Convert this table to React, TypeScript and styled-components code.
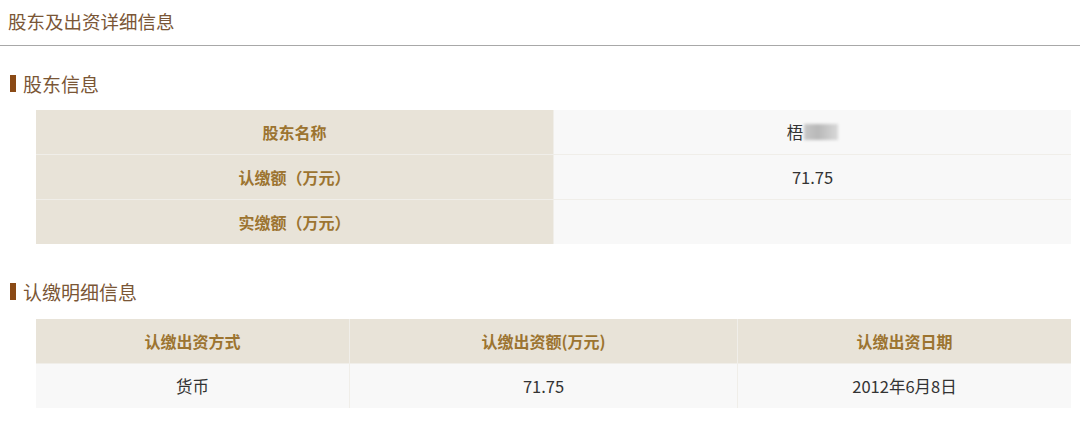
import React from 'react';
import styled, { createGlobalStyle } from 'styled-components';

const GlobalStyle = createGlobalStyle`
  html, body {
    margin: 0;
    padding: 0;
    background: #ffffff;
    font-family: "Noto Sans CJK SC", "Liberation Sans", sans-serif;
  }
`;

const holders = [
  { label: '股东名称', value: 'name' },
  { label: '认缴额（万元）', value: '71.75' },
  { label: '实缴额（万元）', value: '' },
];

const detailHead = ['认缴出资方式', '认缴出资额(万元)', '认缴出资日期'];
const detailRows = [['货币', '71.75', '2012年6月8日']];

function App() {
  return (
    <>
      <GlobalStyle />
      <Page>
        <PageTitle>股东及出资详细信息</PageTitle>
        <Section>
          <SectionTitle>股东信息</SectionTitle>
          <InfoTable>
            {holders.map((row) => (
              <InfoRow key={row.label}>
                <LabelCell>{row.label}</LabelCell>
                <ValueCell>
                  {row.value === 'name' ? (
                    <>
                      梧<Blur />
                    </>
                  ) : (
                    row.value
                  )}
                </ValueCell>
              </InfoRow>
            ))}
          </InfoTable>
        </Section>
        <Section>
          <SectionTitle>认缴明细信息</SectionTitle>
          <DetailTable>
            <DetailRow>
              {detailHead.map((h) => (
                <LabelCell key={h}>{h}</LabelCell>
              ))}
            </DetailRow>
            {detailRows.map((r, i) => (
              <DetailRow key={i}>
                {r.map((c, j) => (
                  <ValueCell key={j}>{c}</ValueCell>
                ))}
              </DetailRow>
            ))}
          </DetailTable>
        </Section>
      </Page>
    </>
  );
}

const Page = styled.div`
  width: 1080px;
  height: 440px;
  overflow: hidden;
`;

const PageTitle = styled.div`
  height: 45px;
  padding-left: 8px;
  line-height: 42px;
  font-size: 18.5px;
  color: #7a5636;
  border-bottom: 1.5px solid #a8a8a8;
`;

const Section = styled.section`
  padding: 25px 9px 0 36px;
  &:last-child {
    padding-top: 35px;
  }
`;

const SectionTitle = styled.div`
  display: flex;
  align-items: center;
  gap: 7px;
  margin-left: -26px;
  height: 24px;
  font-size: 19px;
  color: #7a5636;
  &::before {
    content: '';
    width: 6px;
    height: 17px;
    background: #8a4a16;
  }
`;

const InfoTable = styled.div`
  margin-top: 15px;
  display: grid;
  background: #f0eee9;
  gap: 1px;
`;

const InfoRow = styled.div`
  display: grid;
  grid-template-columns: 517px 1fr;
  gap: 1px;
  height: 44px;
`;

const DetailTable = styled.div`
  margin-top: 16px;
  display: grid;
  gap: 1px;
  background: #f0eee9;
`;

const DetailRow = styled.div`
  display: grid;
  grid-template-columns: 313px 387px 1fr;
  gap: 1px;
  height: 44px;
`;

const LabelCell = styled.div`
  display: flex;
  align-items: center;
  justify-content: center;
  background: #e8e3d8;
  color: #9c7430;
  font-size: 16px;
  font-weight: bold;
`;

const ValueCell = styled.div`
  display: flex;
  align-items: center;
  justify-content: center;
  background: #f8f8f8;
  color: #333333;
  font-size: 16.5px;
`;

const Blur = styled.span`
  display: inline-block;
  width: 34px;
  height: 16px;
  margin-left: 1px;
  background: linear-gradient(90deg, #c8c8c8, #b8b8b8 40%, #d8d8d8);
  filter: blur(1.5px);
`;

export default App;
